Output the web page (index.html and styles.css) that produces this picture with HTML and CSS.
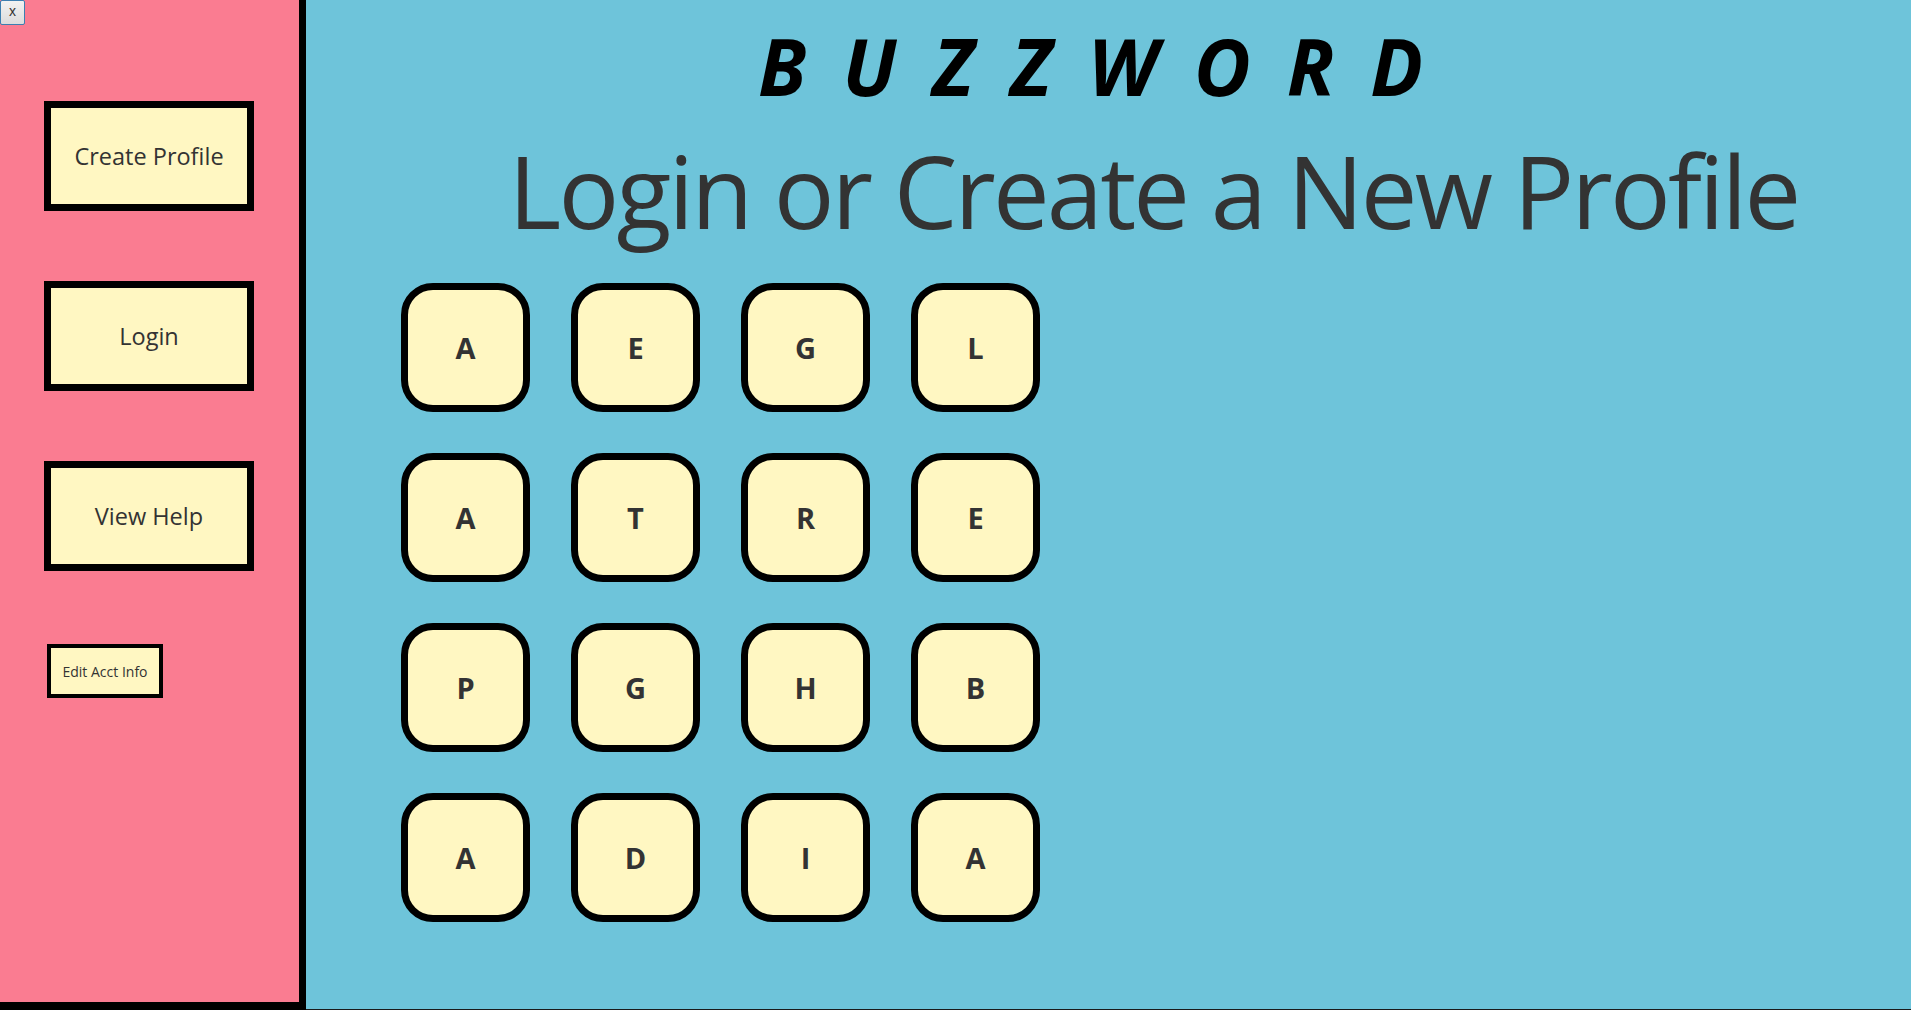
FILE: index.html
```html
<!DOCTYPE html>
<html lang="en">
<head>
<meta charset="utf-8">
<title>Buzzword</title>
<link rel="stylesheet" href="styles.css">
</head>
<body>
<div class="app">
  <button class="close">x</button>
  <aside class="sidebar">
    <button class="side-btn">Create Profile</button>
    <button class="side-btn">Login</button>
    <button class="side-btn">View Help</button>
    <button class="small-btn">Edit Acct Info</button>
  </aside>
  <main class="main">
    <div class="title">BUZZWORD</div>
    <h1 class="heading">Login or Create a New Profile</h1>
    <div class="grid">
      <div class="tile">A</div><div class="tile">E</div><div class="tile">G</div><div class="tile">L</div>
      <div class="tile">A</div><div class="tile">T</div><div class="tile">R</div><div class="tile">E</div>
      <div class="tile">P</div><div class="tile">G</div><div class="tile">H</div><div class="tile">B</div>
      <div class="tile">A</div><div class="tile">D</div><div class="tile">I</div><div class="tile">A</div>
    </div>
  </main>
</div>
</body>
</html>
```
FILE: styles.css
```css
html, body {
  margin: 0;
  padding: 0;
  height: 100%;
  overflow: hidden;
}
body {
  font-family: "Open Sans", "Noto Sans", sans-serif;
  color: #333333;
}
.app {
  position: relative;
  display: flex;
  height: 1010px;
  width: 1911px;
}
.close {
  position: absolute;
  left: 0;
  top: 0;
  width: 25px;
  height: 25px;
  padding: 0 0 3px 0;
  box-sizing: border-box;
  border: 1px solid #3c7fb1;
  border-radius: 2px;
  background: linear-gradient(#f2f2f2, #dcdcdc);
  font-family: "Liberation Sans", sans-serif;
  font-size: 14px;
  color: #333;
  line-height: 20px;
}
.sidebar {
  width: 255px;
  height: 901px;
  flex: none;
  background: #fa7c91;
  border-right: 7px solid #000;
  border-bottom: 8px solid #000;
  display: flex;
  flex-direction: column;
  align-items: flex-start;
  padding: 101px 0 0 44px;
  box-sizing: content-box;
  gap: 70px;
}
.side-btn {
  width: 210px;
  height: 110px;
  box-sizing: border-box;
  border: 7px solid #000;
  background: #fff7c2;
  font-family: "Open Sans", "Noto Sans", sans-serif;
  font-size: 23.5px;
  color: #333;
  padding: 0;
  margin: 0;
}
.small-btn {
  width: 116px;
  height: 54px;
  box-sizing: border-box;
  border: 4px solid #000;
  background: #fff7c2;
  font-family: "Open Sans", "Noto Sans", sans-serif;
  font-size: 14px;
  color: #333;
  padding: 0;
  margin: 3px 0 0 3px;
}
.main {
  flex: 1;
  background: #6ec4da;
  border-bottom: 1px solid #1a1a1a;
  display: flex;
  flex-direction: column;
}
.title {
  margin-top: 27px;
  text-align: center;
  font-family: "Open Sans", sans-serif;
  font-weight: 700;
  font-style: italic;
  font-size: 78px;
  line-height: 78px;
  letter-spacing: 36px;
  color: #000;
}
.heading {
  margin: 35px 0 0 0;
  padding-left: 90px;
  text-align: center;
  font-weight: 400;
  font-size: 101px;
  line-height: 101px;
  letter-spacing: -2.8px;
  color: #333;
}
.grid {
  margin: 42px 0 0 95px;
  display: grid;
  grid-template-columns: repeat(4, 129px);
  grid-auto-rows: 129px;
  gap: 41px;
}
.tile {
  box-sizing: border-box;
  border: 7px solid #000;
  border-radius: 32px;
  background: #fff7c2;
  display: flex;
  align-items: center;
  justify-content: center;
  font-weight: 700;
  font-size: 29px;
  color: #333;
}
```
